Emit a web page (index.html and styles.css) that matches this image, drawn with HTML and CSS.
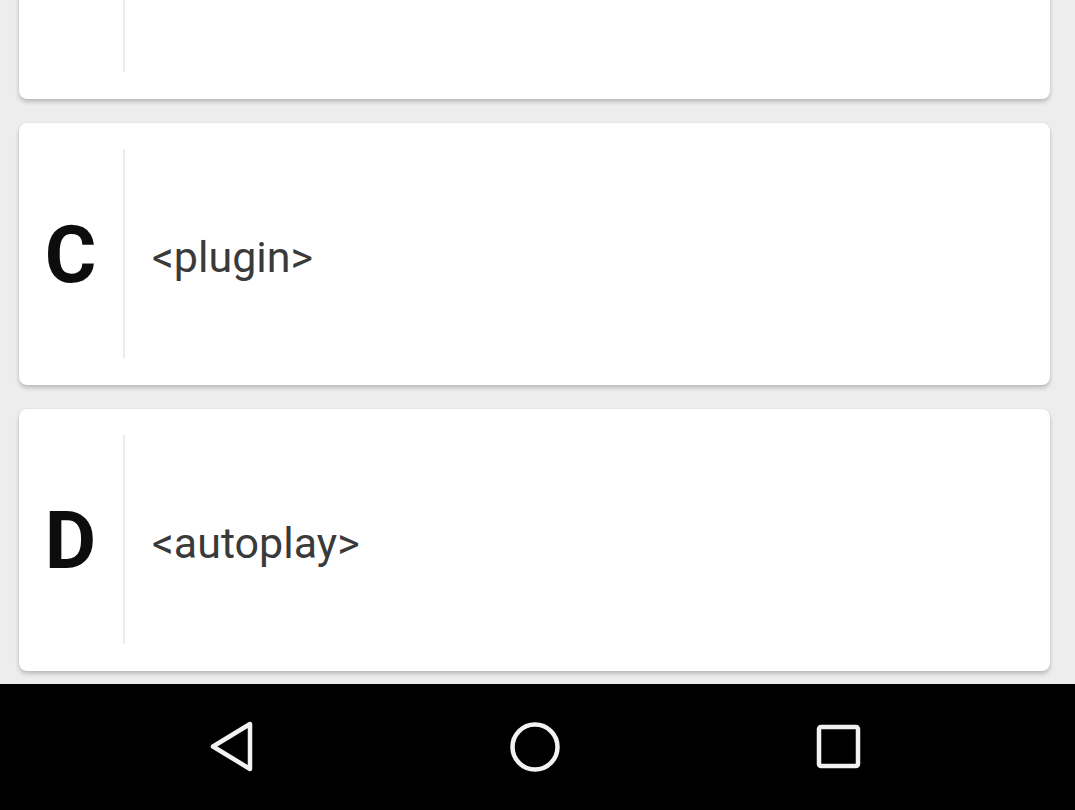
FILE: index.html
```html
<!DOCTYPE html>
<html>
<head>
<meta charset="utf-8">
<link rel="stylesheet" href="styles.css">
</head>
<body>
<div class="screen">
  <div class="list">
    <div class="card">
      <div class="letter">B</div>
      <div class="option">&lt;audio&gt;</div>
    </div>
    <div class="card">
      <div class="letter">C</div>
      <div class="option">&lt;plugin&gt;</div>
    </div>
    <div class="card">
      <div class="letter">D</div>
      <div class="option">&lt;autoplay&gt;</div>
    </div>
  </div>
</div>
<div class="navbar">
  <svg class="nav-icon" width="50" height="56" viewBox="0 0 50 56">
    <path d="M44 5 L44 50 L7 27.5 Z" fill="none" stroke="#f2f2f2" stroke-width="4.5" stroke-linejoin="round"/>
  </svg>
  <svg class="nav-icon" width="56" height="56" viewBox="0 0 56 56">
    <circle cx="28" cy="28" r="22.5" fill="none" stroke="#f2f2f2" stroke-width="4.5"/>
  </svg>
  <svg class="nav-icon" width="50" height="56" viewBox="0 0 50 56">
    <rect x="5" y="8" width="39" height="39" rx="2" fill="none" stroke="#f2f2f2" stroke-width="4.5"/>
  </svg>
</div>
</body>
</html>
```
FILE: styles.css
```css
html, body {
  margin: 0;
  padding: 0;
}
body {
  background: #ededed;
  width: 1075px;
  height: 810px;
  overflow: hidden;
  font-family: Roboto, "Liberation Sans", sans-serif;
}
.screen {
  height: 684px;
  overflow: hidden;
}
.list {
  display: flex;
  flex-direction: column;
  gap: 24px;
  padding: 0 25px 0 19px;
  margin-top: -163px;
}
.card {
  height: 262px;
  background: #ffffff;
  border-radius: 8px;
  box-shadow: 0 3px 4px rgba(0, 0, 0, 0.2), 0 0 2px rgba(0, 0, 0, 0.08);
  display: flex;
  align-items: center;
  padding: 26px 0 27px;
  box-sizing: border-box;
}
.letter {
  width: 106px;
  align-self: stretch;
  display: flex;
  align-items: center;
  justify-content: center;
  border-right: 2px solid #ececec;
  font-weight: 700;
  font-size: 79px;
  color: #0d0d0d;
  line-height: 1;
  padding-top: 4px;
  padding-right: 1px;
  box-sizing: border-box;
}
.option {
  padding-left: 27px;
  padding-top: 8px;
  font-size: 43px;
  color: #3a3a3a;
  line-height: 1;
}
.navbar {
  height: 126px;
  background: #000;
  display: flex;
  align-items: center;
  justify-content: space-between;
  padding: 0 211px 0 206px;
}
.nav-icon {
  display: block;
}
```
